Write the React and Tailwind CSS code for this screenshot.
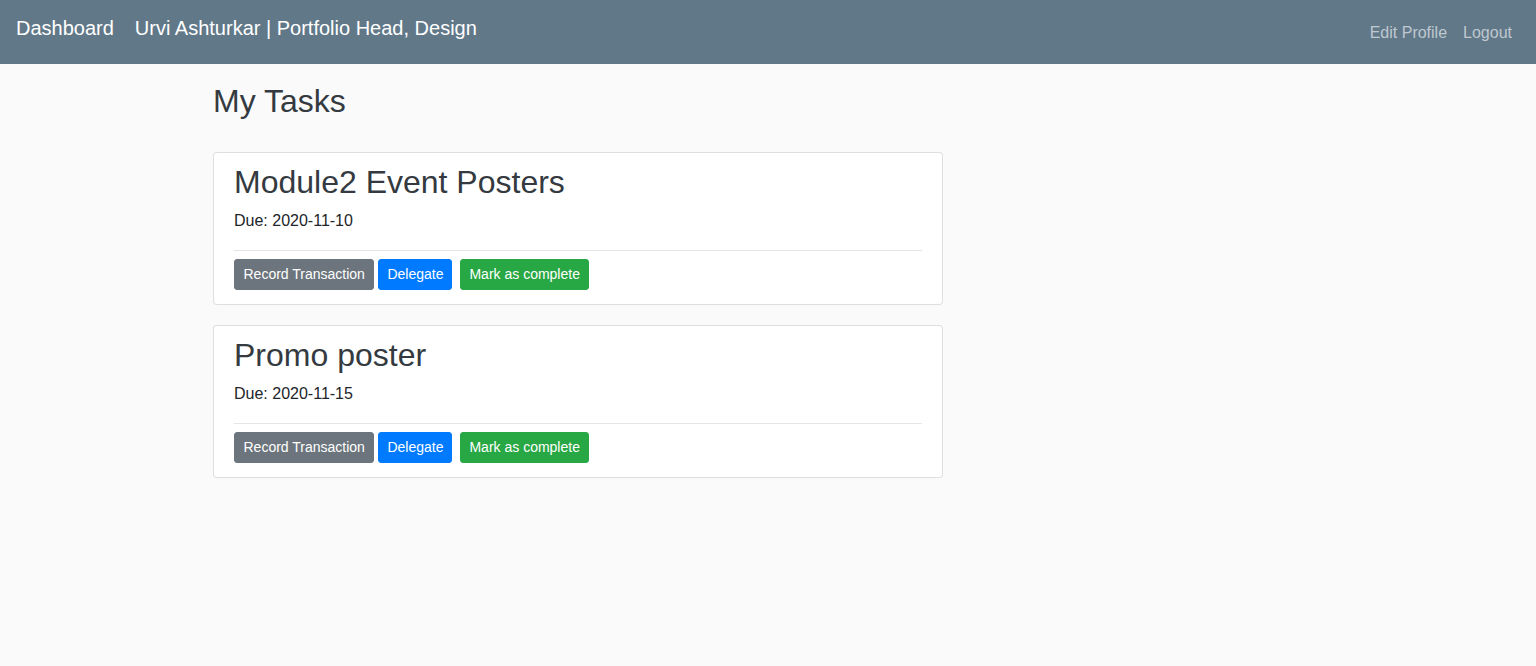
import React from 'react';

const tasks = [
  { title: 'Module2 Event Posters', due: '2020-11-10' },
  { title: 'Promo poster', due: '2020-11-15' },
];

function TaskCard({ task }) {
  return (
    <div className="w-[730px] mb-5 bg-white border border-black/[0.125] rounded px-5 pt-2.5 pb-[14px]">
      <h2 className="text-[32px] leading-[1.2] text-[#343a40] mb-2">{task.title}</h2>
      <p className="text-base leading-6 text-[#212529] mb-[16.6px]">Due: {task.due}</p>
      <hr className="border-0 border-t border-black/10 mb-2" />
      <div className="flex items-center">
        <button className="px-[8.5px] py-1 text-sm leading-[21px] text-white bg-[#6c757d] border border-[#6c757d] rounded-[3px]">
          Record Transaction
        </button>
        <button className="ml-1 px-2 py-1 text-sm leading-[21px] text-white bg-[#007bff] border border-[#007bff] rounded-[3px]">
          Delegate
        </button>
        <button className="ml-2 px-2 py-1 text-sm leading-[21px] text-white bg-[#28a745] border border-[#28a745] rounded-[3px]">
          Mark as complete
        </button>
      </div>
    </div>
  );
}

export default function App() {
  return (
    <div className="min-h-[666px] bg-[#fafafa] font-['Liberation_Sans',Arial,sans-serif]">
      {/* Navbar */}
      <nav className="h-16 bg-[#617889] px-4 flex justify-between">
        <div className="flex items-start pt-[13px]">
          <a className="text-xl leading-[30px] text-white">Dashboard</a>
          <span className="ml-[21px] text-xl leading-[30px] text-white">
            Urvi Ashturkar | Portfolio Head, Design
          </span>
        </div>
        <div className="flex items-center pt-[2px]">
          <a className="px-2 text-base leading-6 text-white/60">Edit Profile</a>
          <a className="px-2 text-base leading-6 text-white/60">Logout</a>
        </div>
      </nav>

      {/* Content */}
      <div className="w-[1140px] mx-auto px-[15px]">
        <h1 className="mt-[18px] mb-[31.6px] text-[32px] leading-[1.2] text-[#343a40]">My Tasks</h1>
        {tasks.map((t) => (
          <TaskCard key={t.title} task={t} />
        ))}
      </div>
    </div>
  );
}
